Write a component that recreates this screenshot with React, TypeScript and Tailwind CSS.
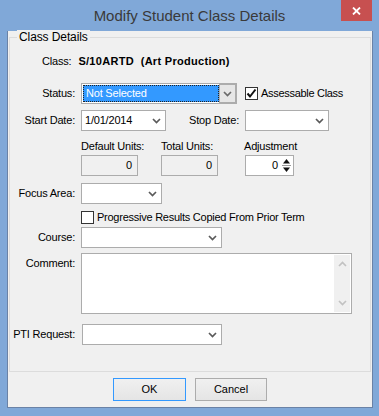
import React from "react";

const font = { fontFamily: '"Liberation Sans", Arial, sans-serif' };

function Chevron({ color = "#5a5a5a" }: { color?: string }) {
  return (
    <svg width="9" height="6" viewBox="0 0 9 6">
      <polyline points="1,1 4.5,4.5 8,1" fill="none" stroke={color} strokeWidth="1.7" />
    </svg>
  );
}

function Combo({ w, value }: { w: string; value?: string }) {
  return (
    <div className={`${w} h-[21px] border border-[#acacac] bg-white flex items-center`}>
      <div className="flex-1 pl-[3px] text-[11px] tracking-[-0.2px] text-black leading-none">{value}</div>
      <div className="w-[16px] flex items-center justify-center pr-[2px]">
        <Chevron />
      </div>
    </div>
  );
}

function Label({ children, className = "" }: { children: React.ReactNode; className?: string }) {
  return (
    <div className={`w-[65px] text-right text-[11px] tracking-[-0.2px] text-black leading-none ${className}`}>
      {children}
    </div>
  );
}

export default function App() {
  return (
    <div className="w-[379px] h-[416px] bg-[#80a8d8] flex flex-col relative select-none" style={font}>
      {/* Title bar */}
      <div className="h-[31px] flex items-center justify-center pb-[1px]">
        <span className="text-[15px] text-[#3a3a3a] leading-none">Modify Student Class Details</span>
      </div>
      <div className="absolute top-0 right-[7px] w-[31px] h-[21px] bg-[#c75050] flex items-center justify-center">
        <svg width="9" height="8" viewBox="0 0 9 8">
          <path d="M1 0.5 L8 7.5 M8 0.5 L1 7.5" stroke="white" strokeWidth="1.8" />
        </svg>
      </div>

      {/* Client */}
      <div className="ml-[7px] w-[366px] h-[377px] border-x border-b border-[#6a82a6] bg-[#f0f0f0] flex flex-col">
        {/* Group box */}
        <div className="relative ml-[1px] mt-[6px] w-[362px] h-[335px] border border-[#dcdcdc] flex flex-col">
          <span className="absolute -top-[8px] left-[7px] px-[2px] bg-[#f0f0f0] text-[12px] leading-[15px] tracking-[-0.1px] text-black">
            Class Details
          </span>

          {/* Class row */}
          <div className="mt-[15px] h-[16px] flex items-center">
            <div className="ml-[32px] text-[11px] tracking-[-0.2px] leading-none text-black">Class:</div>
            <div className="ml-[7px] text-[11px] leading-none font-bold tracking-[0.3px] text-black whitespace-pre">
              S/10ARTD  (Art Production)
            </div>
          </div>

          {/* Status row */}
          <div className="mt-[14px] h-[21px] flex items-center">
            <Label>Status:</Label>
            <div className="ml-[6px] w-[156px] h-[21px] border border-[#acacac] bg-white flex p-[1px]">
              <div className="flex-1 bg-[#3399ff] border border-dotted border-[#222] flex items-center pl-[2px] text-[11px] tracking-[-0.2px] leading-none text-white">
                Not Selected
              </div>
              <div className="w-[17px] bg-[#e6e6e6] border border-[#acacac] -my-[1px] -mr-[1px] flex items-center justify-center">
                <Chevron color="#6a6a6a" />
              </div>
            </div>
            <div className="ml-[8px] w-[13px] h-[13px] border border-[#333333] bg-white flex items-center justify-center">
              <svg width="11" height="11" viewBox="0 0 11 11">
                <polyline points="1.5,5.5 4,8.5 9.5,1.5" fill="none" stroke="#111" strokeWidth="2" />
              </svg>
            </div>
            <div className="ml-[3px] text-[11px] tracking-[-0.3px] leading-none text-black">Assessable Class</div>
          </div>

          {/* Dates row */}
          <div className="mt-[6px] h-[21px] flex items-center">
            <Label>Start Date:</Label>
            <div className="ml-[6px]">
              <Combo w="w-[85px]" value="1/01/2014" />
            </div>
            <div className="w-[73px] text-right text-[11px] tracking-[-0.2px] leading-none text-black">Stop Date:</div>
            <div className="ml-[6px]">
              <Combo w="w-[84px]" />
            </div>
          </div>

          {/* Units */}
          <div className="mt-[8px] ml-[71px] flex">
            <div className="w-[80px] flex flex-col">
              <div className="h-[14px] text-[11px] tracking-[-0.2px] leading-[14px] text-black">Default Units:</div>
              <div className="mt-[2px] w-[57px] h-[21px] border border-[#acacac] bg-[#f0f0f0] flex items-center justify-end pr-[5px] text-[11px] leading-none text-black">
                0
              </div>
            </div>
            <div className="w-[83px] flex flex-col">
              <div className="h-[14px] text-[11px] tracking-[-0.2px] leading-[14px] text-black">Total Units:</div>
              <div className="mt-[2px] w-[57px] h-[21px] border border-[#acacac] bg-[#f0f0f0] flex items-center justify-end pr-[5px] text-[11px] leading-none text-black">
                0
              </div>
            </div>
            <div className="flex flex-col">
              <div className="h-[14px] text-[11px] tracking-[-0.2px] leading-[14px] text-black">Adjustment</div>
              <div className="mt-[2px] ml-[1px] w-[49px] h-[21px] border border-[#acacac] bg-white flex items-center">
                <div className="flex-1 text-right pr-[3px] text-[11px] leading-none text-black">0</div>
                <div className="w-[11px] h-[17px] mr-[1px] flex flex-col items-center justify-center">
                  <svg width="9" height="17" viewBox="0 0 9 17">
                    <polygon points="4.5,2 8,6.5 1,6.5" fill="#111" />
                    <line x1="0" y1="8.5" x2="9" y2="8.5" stroke="#9a9a9a" strokeWidth="1" />
                    <polygon points="1,10.5 8,10.5 4.5,15" fill="#111" />
                  </svg>
                </div>
              </div>
            </div>
          </div>

          {/* Focus Area */}
          <div className="mt-[7px] h-[21px] flex items-center">
            <Label>Focus Area:</Label>
            <div className="ml-[6px]">
              <Combo w="w-[81px]" />
            </div>
          </div>

          {/* Progressive */}
          <div className="mt-[7px] h-[13px] flex items-center ml-[71px]">
            <div className="w-[13px] h-[13px] border border-[#333333] bg-white" />
            <div className="ml-[3px] text-[11px] tracking-[-0.25px] leading-none text-black">
              Progressive Results Copied From Prior Term
            </div>
          </div>

          {/* Course */}
          <div className="mt-[3px] h-[21px] flex items-center">
            <Label>Course:</Label>
            <div className="ml-[6px]">
              <Combo w="w-[141px]" />
            </div>
          </div>

          {/* Comment */}
          <div className="mt-[5px] h-[61px] flex items-start">
            <Label className="mt-[5px]">Comment:</Label>
            <div className="ml-[6px] w-[271px] h-[61px] border border-[#acacac] bg-white flex justify-end p-[1px]">
              <div className="w-[16px] h-full bg-[#f0f0f0] flex flex-col items-center justify-between py-[6px]">
                <svg width="9" height="6" viewBox="0 0 9 6">
                  <polyline points="1,5 4.5,1.5 8,5" fill="none" stroke="#c2c2c2" strokeWidth="1.7" />
                </svg>
                <Chevron color="#c2c2c2" />
              </div>
            </div>
          </div>

          {/* PTI */}
          <div className="mt-[10px] h-[21px] flex items-center">
            <Label>PTI Request:</Label>
            <div className="ml-[7px]">
              <Combo w="w-[140px]" />
            </div>
          </div>
        </div>

        {/* Buttons */}
        <div className="mt-[6px] flex justify-center gap-[9px]">
          <button className="w-[73px] h-[23px] border border-[#3399ff] bg-gradient-to-b from-[#f0f0f0] to-[#e5e5e5] text-[11px] text-black leading-none">
            OK
          </button>
          <button className="w-[72px] h-[23px] border border-[#acacac] bg-gradient-to-b from-[#f0f0f0] to-[#e5e5e5] text-[11px] text-black leading-none">
            Cancel
          </button>
        </div>
      </div>
    </div>
  );
}
